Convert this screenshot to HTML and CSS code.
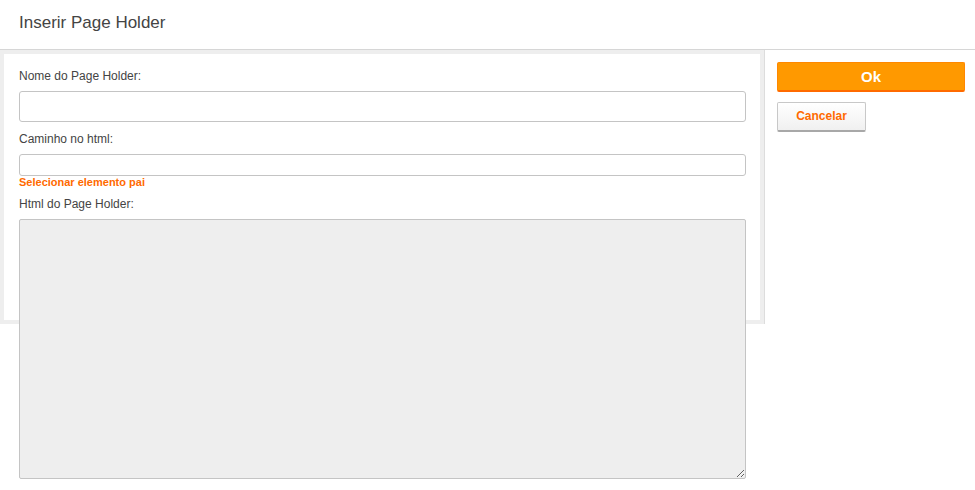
FILE: index.html
```html
<!DOCTYPE html>
<html lang="pt">
<head>
  <meta charset="UTF-8" />
  <meta name="viewport" content="width=device-width, initial-scale=1.0"/>
  <title>Inserir Page Holder</title>
  <link rel="stylesheet" href="styles.css">
</head>
<body>
  <div class="header">
    <h2>Inserir Page Holder</h2>
  </div>

  <div class="main">
    <div class="panel">
      <div class="form">
        <label>Nome do Page Holder:</label>
        <input type="text" class="input-big" />

        <label>Caminho no html:</label>
        <input type="text" class="input-small" />
        <a href="#" class="pick">Selecionar elemento pai</a>

        <label>Html do Page Holder:</label>
        <textarea></textarea>
      </div>
    </div>

    <div class="sidebar">
      <button class="btn-ok">Ok</button>
      <button class="btn-cancel">Cancelar</button>
    </div>
  </div>
</body>
</html>
```

FILE: styles.css
```css
html {
  min-height: 100%;
}

body {
  margin: 0;
  min-height: 490px;
  font-family: "Liberation Sans", Arial, sans-serif;
  color: #444;
  background-color: white;
}

.header {
  height: 49px;
  border-bottom: 1px solid #d6d6d6;
  padding: 0 19px;
}

.header h2 {
  margin: 0;
  font-size: 17px;
  font-weight: normal;
  line-height: 46px;
  color: #444;
}

.main {
  display: flex;
  align-items: flex-start;
}

.panel {
  width: 756px;
  padding: 4px;
  background-color: #eeeeee;
  border-right: 1px solid #dddddd;
}

.form {
  height: 236px;
  background-color: white;
  padding: 15px 14px 15px 15px;
}

label {
  display: block;
  font-size: 12px;
  line-height: 14px;
  margin-bottom: 8px;
  color: #444;
}

input {
  display: block;
  box-sizing: border-box;
  width: 100%;
  border: 1px solid #c4c4c4;
  border-radius: 3px;
  margin: 0 0 10px;
  padding: 4px 6px;
  font-family: inherit;
}

.input-big {
  height: 31px;
}

.input-small {
  height: 22px;
  margin-bottom: 0;
}

.pick {
  display: block;
  font-size: 11px;
  font-weight: bold;
  line-height: 12px;
  color: #ff6a00;
  text-decoration: none;
  margin-bottom: 9px;
}

textarea {
  display: block;
  box-sizing: border-box;
  width: 100%;
  height: 260px;
  background-color: #eeeeee;
  border: 1px solid #c4c4c4;
  border-radius: 2px;
  margin: 1px 0 0;
}

.sidebar {
  flex: 1;
  padding: 12px 10px 0 12px;
}

button {
  display: block;
  font-family: inherit;
  cursor: pointer;
}

.btn-ok {
  width: 100%;
  height: 30px;
  background-color: #ff9900;
  color: white;
  font-size: 15px;
  font-weight: bold;
  border: 1px solid #ff8800;
  border-bottom: 2px solid #ff6a00;
  border-radius: 2px;
  margin-bottom: 10px;
}

.btn-cancel {
  width: 89px;
  height: 30px;
  padding-bottom: 2px;
  background: linear-gradient(#ffffff, #f0f0f0);
  color: #ff6a00;
  font-size: 12px;
  font-weight: bold;
  border: 1px solid #c8c8c8;
  border-bottom: 2px solid #a8a8a8;
  border-radius: 2px;
}
```
